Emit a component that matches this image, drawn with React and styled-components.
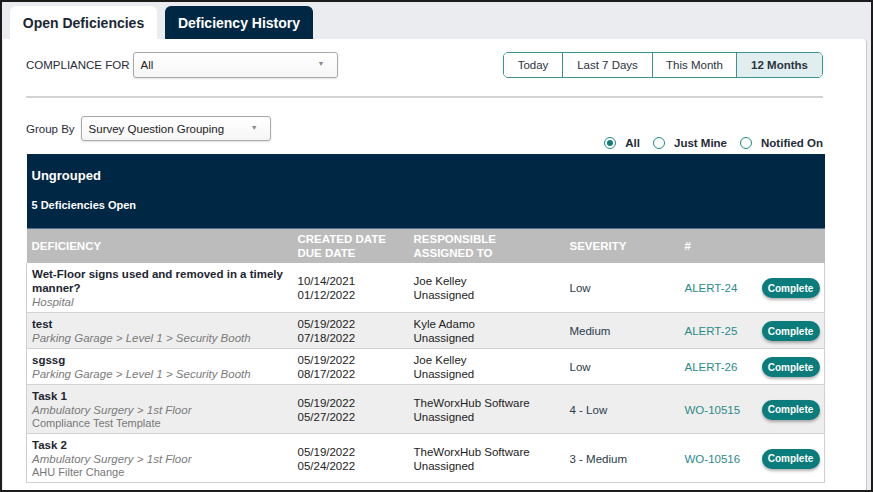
import React from 'react'
import styled, { createGlobalStyle } from 'styled-components'

const GlobalStyle = createGlobalStyle`
  html, body {
    margin: 0;
    padding: 0;
    background: #fff;
  }
  body {
    font-family: "Liberation Sans", Arial, sans-serif;
  }
`

const Frame = styled.div`
  width: 873px;
  height: 492px;
  box-sizing: border-box;
  border: 2px solid #1c1c1c;
  background: #ebecf0;
  display: flex;
  flex-direction: column;
  overflow: hidden;
`

const TabBar = styled.div`
  display: flex;
  gap: 8px;
  padding: 4px 0 0 8px;
`

const Tab = styled.div`
  height: 33px;
  width: ${p => p.w}px;
  box-sizing: border-box;
  border-radius: 6px 6px 0 0;
  display: flex;
  align-items: center;
  justify-content: center;
  font-size: 14px;
  font-weight: bold;
  background: ${p => (p.active ? '#fff' : '#002744')};
  color: ${p => (p.active ? '#1b2733' : '#fff')};
`

const Panel = styled.div`
  flex: 1;
  margin: 0 4px 0 1px;
  background: #fff;
  border-radius: 0 4px 0 0;
  border-right: 1px solid #c9c9c9;
  padding: 13px 43px 0 23px;
`

const TopRow = styled.div`
  display: flex;
  align-items: center;
  justify-content: space-between;
  height: 26px;
`

const Field = styled.div`
  display: flex;
  align-items: center;
  gap: ${p => p.gap || 3}px;
`

const Label = styled.span`
  font-size: 11.5px;
  color: #1f2b38;
`

const Select = styled.div`
  width: ${p => p.w}px;
  height: ${p => p.h}px;
  box-sizing: border-box;
  border: 1px solid #a9a9a9;
  border-radius: 3px;
  background: linear-gradient(#ffffff, #f6f6f6);
  box-shadow: 0 1px 2px rgba(0, 0, 0, 0.12);
  display: flex;
  align-items: center;
  justify-content: space-between;
  padding: 0 12px 0 7px;
  font-size: 11.5px;
  color: #222;
`

const Caret = styled.span`
  font-size: 7px;
  color: #888;
  margin-top: -3px;
`

const Segments = styled.div`
  display: flex;
  height: 26px;
  border: 1px solid #3a9292;
  border-radius: 5px;
  overflow: hidden;
  box-sizing: border-box;
`

const Segment = styled.div`
  width: ${p => p.w}px;
  box-sizing: border-box;
  display: flex;
  align-items: center;
  justify-content: center;
  font-size: 11.5px;
  color: #2a3440;
  font-weight: ${p => (p.active ? 'bold' : 'normal')};
  background: ${p => (p.active ? '#e1eef0' : '#fff')};
  & + & {
    border-left: 1px solid #3a9292;
  }
`

const Divider = styled.div`
  height: 2px;
  background: #d3d3d3;
  margin-top: 18px;
`

const GroupRow = styled.div`
  display: flex;
  justify-content: space-between;
  align-items: flex-end;
  margin-top: 18px;
`

const GroupField = styled(Field)`
  margin-bottom: 8px;
`

const Radios = styled.div`
  display: flex;
  gap: 13px;
  height: 13px;
  align-items: center;
`

const RadioItem = styled.div`
  display: flex;
  align-items: center;
  gap: 9px;
  font-size: 11.5px;
  font-weight: bold;
  color: #1f2b38;
`

const Circle = styled.span`
  width: 12px;
  height: 12px;
  box-sizing: border-box;
  border-radius: 50%;
  border: 1.5px solid #1d8a88;
  display: flex;
  align-items: center;
  justify-content: center;
  &::after {
    content: '';
    width: 6px;
    height: 6px;
    border-radius: 50%;
    background: ${p => (p.checked ? '#137d7b' : 'transparent')};
  }
`

const Table = styled.table`
  margin-top: 5px;
  width: 798px;
  border-collapse: collapse;
  table-layout: fixed;
  font-size: 11.5px;
`

const GroupHead = styled.th`
  background: #002744;
  color: #fff;
  text-align: left;
  padding: 14px 5px 16px;
  font-weight: bold;
`

const GroupTitle = styled.div`
  font-size: 13px;
  line-height: 16px;
`

const GroupSub = styled.div`
  font-size: 11px;
  line-height: 14px;
  margin-top: 14px;
`

const ColHead = styled.th`
  background: #bcbcbc;
  border-top: 1px solid #55708a;
  color: #fff;
  font-weight: bold;
  text-align: left;
  text-transform: uppercase;
  line-height: 14px;
  padding: 3px 5px 3px;
  height: 34px;
  box-sizing: border-box;
  vertical-align: middle;
`

const Row = styled.tr`
  background: ${p => (p.shaded ? '#eeeeee' : '#fff')};
  border-bottom: 1px solid #d2d2d2;
  border-left: 1px solid #cfcfcf;
  border-right: 1px solid #cfcfcf;
`

const Cell = styled.td`
  padding: 4px 5px 3px;
  line-height: 14px;
  vertical-align: middle;
  color: ${p => p.color || '#222'};
`

const Title = styled.div`
  font-weight: bold;
  color: #1c2530;
`

const Location = styled.div`
  font-style: italic;
  color: #7a7a7a;
`

const Template = styled.div`
  font-size: 11px;
  line-height: 13px;
  color: #777;
`

const CompleteButton = styled.button`
  width: 58px;
  height: 20px;
  border: none;
  border-radius: 10px;
  background: #0a7c7b;
  color: #fff;
  font-family: inherit;
  font-size: 10px;
  font-weight: bold;
  box-shadow: 0 2px 3px rgba(0, 0, 0, 0.3);
  padding: 0;
  margin-left: -1px;
  cursor: pointer;
`

const rows = [
  {
    title: ['Wet-Floor signs used and removed in a timely manner?'],
    location: 'Hospital',
    created: '10/14/2021',
    due: '01/12/2022',
    responsible: 'Joe Kelley',
    severity: 'Low',
    id: 'ALERT-24'
  },
  {
    title: ['test'],
    location: 'Parking Garage > Level 1 > Security Booth',
    created: '05/19/2022',
    due: '07/18/2022',
    responsible: 'Kyle Adamo',
    severity: 'Medium',
    id: 'ALERT-25'
  },
  {
    title: ['sgssg'],
    location: 'Parking Garage > Level 1 > Security Booth',
    created: '05/19/2022',
    due: '08/17/2022',
    responsible: 'Joe Kelley',
    severity: 'Low',
    id: 'ALERT-26'
  },
  {
    title: ['Task 1'],
    location: 'Ambulatory Surgery > 1st Floor',
    template: 'Compliance Test Template',
    created: '05/19/2022',
    due: '05/27/2022',
    responsible: 'TheWorxHub Software',
    severity: '4 - Low',
    id: 'WO-10515'
  },
  {
    title: ['Task 2'],
    location: 'Ambulatory Surgery > 1st Floor',
    template: 'AHU Filter Change',
    created: '05/19/2022',
    due: '05/24/2022',
    responsible: 'TheWorxHub Software',
    severity: '3 - Medium',
    id: 'WO-10516'
  }
]

const ranges = [
  { label: 'Today', w: 58 },
  { label: 'Last 7 Days', w: 90 },
  { label: 'This Month', w: 84 },
  { label: '12 Months', w: 86, active: true }
]

export default function App() {
  return (
    <>
      <GlobalStyle />
      <Frame>
        <TabBar>
          <Tab active w={147}>Open Deficiencies</Tab>
          <Tab w={148}>Deficiency History</Tab>
        </TabBar>
        <Panel>
          <TopRow>
            <Field>
              <Label>COMPLIANCE FOR</Label>
              <Select w={205} h={26}>
                All
                <Caret>▼</Caret>
              </Select>
            </Field>
            <Segments>
              {ranges.map(r => (
                <Segment key={r.label} w={r.w} active={r.active}>
                  {r.label}
                </Segment>
              ))}
            </Segments>
          </TopRow>
          <Divider />
          <GroupRow>
            <GroupField gap={6}>
              <Label>Group By</Label>
              <Select w={190} h={25}>
                Survey Question Grouping
                <Caret>▼</Caret>
              </Select>
            </GroupField>
            <Radios>
              <RadioItem><Circle checked />All</RadioItem>
              <RadioItem><Circle />Just Mine</RadioItem>
              <RadioItem><Circle />Notified On</RadioItem>
            </Radios>
          </GroupRow>
          <Table>
            <colgroup>
              <col style={{ width: 266 }} />
              <col style={{ width: 116 }} />
              <col style={{ width: 156 }} />
              <col style={{ width: 115 }} />
              <col style={{ width: 78 }} />
              <col style={{ width: 67 }} />
            </colgroup>
            <thead>
              <tr>
                <GroupHead colSpan={6}>
                  <GroupTitle>Ungrouped</GroupTitle>
                  <GroupSub>5 Deficiencies Open</GroupSub>
                </GroupHead>
              </tr>
              <tr>
                <ColHead>Deficiency</ColHead>
                <ColHead>Created Date<br />Due Date</ColHead>
                <ColHead>Responsible<br />Assigned To</ColHead>
                <ColHead>Severity</ColHead>
                <ColHead>#</ColHead>
                <ColHead />
              </tr>
            </thead>
            <tbody>
              {rows.map((r, i) => (
                <Row key={r.id} shaded={i % 2 === 1}>
                  <Cell>
                    {r.title.map(t => <Title key={t}>{t}</Title>)}
                    <Location>{r.location}</Location>
                    {r.template && <Template>{r.template}</Template>}
                  </Cell>
                  <Cell>{r.created}<br />{r.due}</Cell>
                  <Cell>{r.responsible}<br />Unassigned</Cell>
                  <Cell color="#2a3a4a">{r.severity}</Cell>
                  <Cell color="#2b8b89">{r.id}</Cell>
                  <Cell><CompleteButton>Complete</CompleteButton></Cell>
                </Row>
              ))}
            </tbody>
          </Table>
        </Panel>
      </Frame>
    </>
  )
}
